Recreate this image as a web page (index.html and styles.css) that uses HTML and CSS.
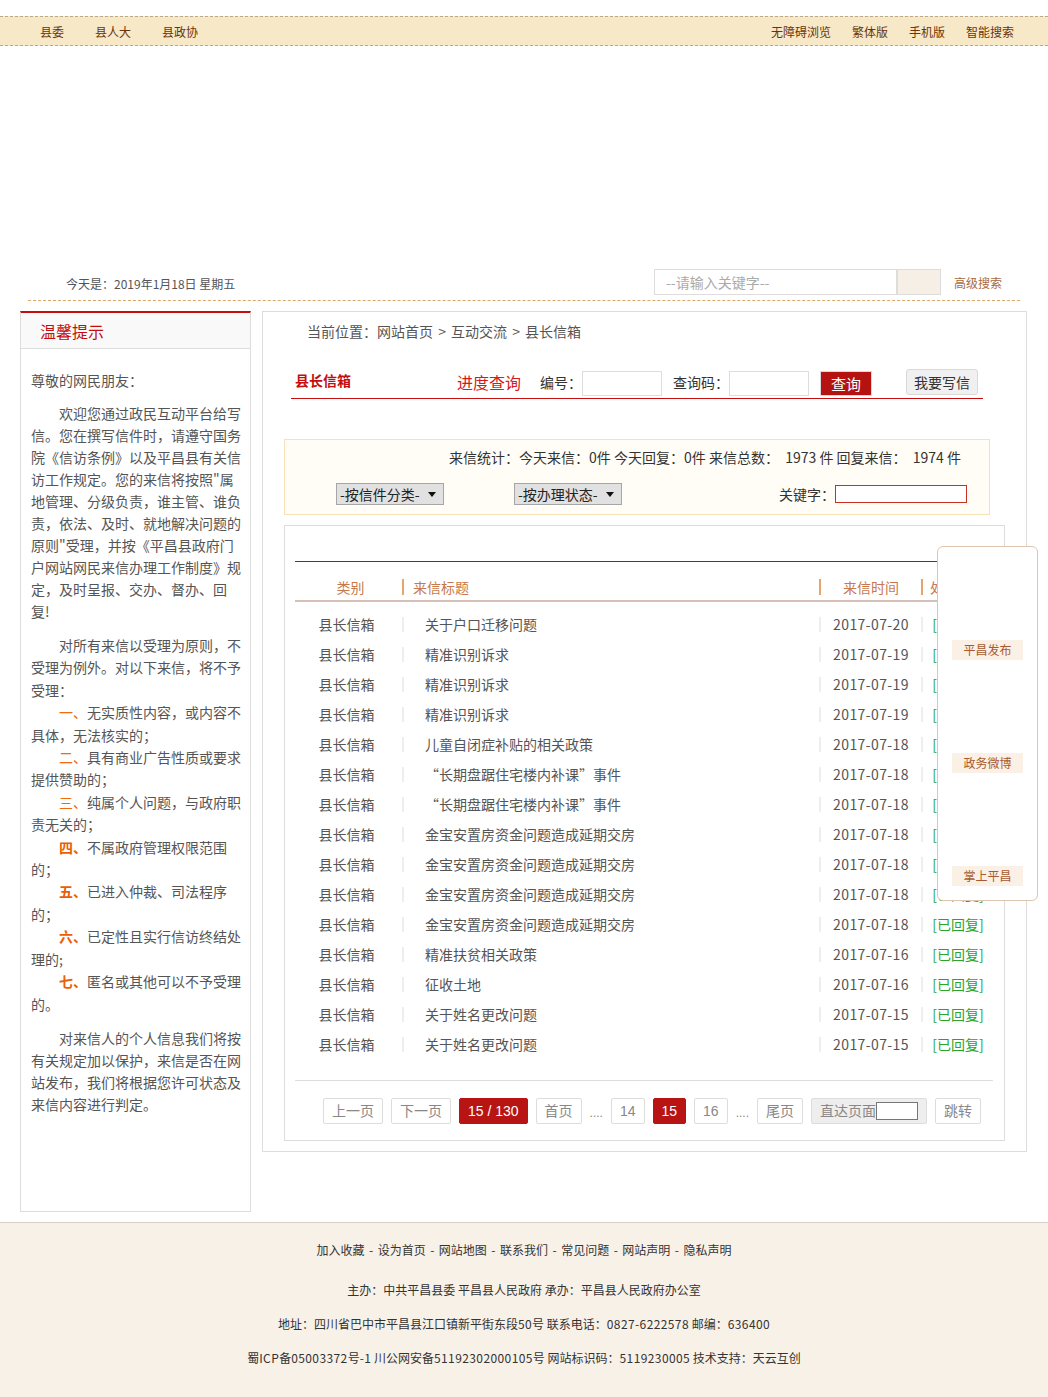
FILE: index.html
```html
<!DOCTYPE html>
<html lang="zh-CN">
<head>
<meta charset="utf-8">
<title>县长信箱</title>
<link rel="stylesheet" href="styles.css">
</head>
<body>
<div class="topbar">
  <div class="topbar-inner">
    <div class="tb-left"><a href="#">县委</a><a href="#">县人大</a><a href="#">县政协</a></div>
    <div class="tb-right"><a href="#">无障碍浏览</a><a href="#">繁体版</a><a href="#">手机版</a><a href="#">智能搜索</a></div>
  </div>
</div>
<div class="banner"></div>
<div class="container">
  <div class="info-row">
    <span class="date">今天是：2019年1月18日 星期五</span>
    <div class="search">
      <input class="search-input" placeholder="--请输入关键字--">
      <span class="search-btn"></span>
      <a class="adv" href="#">高级搜索</a>
    </div>
  </div>
  <div class="dash"></div>
  <div class="main">
    <aside class="side">
      <div class="side-head">温馨提示</div>
      <div class="side-body">
        <p class="p-first">尊敬的网民朋友：</p>
        <p class="ind">欢迎您通过政民互动平台给写信。您在撰写信件时，请遵守国务院《信访条例》以及平昌县有关信访工作规定。您的来信将按照"属地管理、分级负责，谁主管、谁负责，依法、及时、就地解决问题的原则"受理，并按《平昌县政府门户网站网民来信办理工作制度》规定，及时呈报、交办、督办、回复!</p>
        <div class="rules">
          <div class="ind">对所有来信以受理为原则，不受理为例外。对以下来信，将不予受理：</div>
          <div class="ind"><span class="num">一、</span>无实质性内容，或内容不具体，无法核实的；</div>
          <div class="ind"><span class="num">二、</span>具有商业广告性质或要求提供赞助的；</div>
          <div class="ind"><span class="num">三、</span>纯属个人问题，与政府职责无关的；</div>
          <div class="ind"><span class="num b">四、</span>不属政府管理权限范围的；</div>
          <div class="ind"><span class="num b">五、</span>已进入仲裁、司法程序的；</div>
          <div class="ind"><span class="num b">六、</span>已定性且实行信访终结处理的;</div>
          <div class="ind"><span class="num b">七、</span>匿名或其他可以不予受理的。</div>
        </div>
        <p class="ind">对来信人的个人信息我们将按有关规定加以保护，来信是否在网站发布，我们将根据您许可状态及来信内容进行判定。</p>
      </div>
    </aside>
    <section class="content">
      <div class="crumb">当前位置：网站首页 &gt; 互动交流 &gt; 县长信箱</div>
      <div class="tabrow">
        <span class="tab-title">县长信箱</span>
        <span class="tab-query">进度查询</span>
        <span class="lbl">编号：</span>
        <input class="inp" type="text">
        <span class="lbl lbl2">查询码：</span>
        <input class="inp" type="text">
        <span class="qbtn">查询</span>
        <span class="write">我要写信</span>
      </div>
      <div class="stats">
        <div class="stats-line">来信统计：今天来信：0件 今天回复：0件 来信总数： &nbsp;1973 件 回复来信： &nbsp;1974 件</div>
        <div class="filters">
          <span class="fsel">-按信件分类-<i class="arr"></i></span>
          <span class="fsel fsel2">-按办理状态-<i class="arr"></i></span>
          <span class="kw">关键字：</span>
          <input class="kw-inp" type="text">
        </div>
      </div>
      <div class="list">
        <div class="list-top"></div>
        <div class="thead">
          <span class="c-cat"><span class="hc">类别</span></span>
          <span class="c-title"><span class="hc hb">来信标题</span></span>
          <span class="c-date"><span class="hc hb">来信时间</span></span>
          <span class="c-st"><span class="hc hb">处理状态</span></span>
        </div>
        <div class="rows">
          <div class="row"><span class="c-cat">县长信箱</span><span class="c-title"><span class="cell">关于户口迁移问题</span></span><span class="c-date"><span class="cell">2017-07-20</span></span><span class="c-st"><span class="cell ok">[已回复]</span></span></div>
          <div class="row"><span class="c-cat">县长信箱</span><span class="c-title"><span class="cell">精准识别诉求</span></span><span class="c-date"><span class="cell">2017-07-19</span></span><span class="c-st"><span class="cell ok">[已回复]</span></span></div>
          <div class="row"><span class="c-cat">县长信箱</span><span class="c-title"><span class="cell">精准识别诉求</span></span><span class="c-date"><span class="cell">2017-07-19</span></span><span class="c-st"><span class="cell ok">[已回复]</span></span></div>
          <div class="row"><span class="c-cat">县长信箱</span><span class="c-title"><span class="cell">精准识别诉求</span></span><span class="c-date"><span class="cell">2017-07-19</span></span><span class="c-st"><span class="cell ok">[已回复]</span></span></div>
          <div class="row"><span class="c-cat">县长信箱</span><span class="c-title"><span class="cell">儿童自闭症补贴的相关政策</span></span><span class="c-date"><span class="cell">2017-07-18</span></span><span class="c-st"><span class="cell ok">[已回复]</span></span></div>
          <div class="row"><span class="c-cat">县长信箱</span><span class="c-title"><span class="cell">“长期盘踞住宅楼内补课”事件</span></span><span class="c-date"><span class="cell">2017-07-18</span></span><span class="c-st"><span class="cell ok">[已回复]</span></span></div>
          <div class="row"><span class="c-cat">县长信箱</span><span class="c-title"><span class="cell">“长期盘踞住宅楼内补课”事件</span></span><span class="c-date"><span class="cell">2017-07-18</span></span><span class="c-st"><span class="cell ok">[已回复]</span></span></div>
          <div class="row"><span class="c-cat">县长信箱</span><span class="c-title"><span class="cell">金宝安置房资金问题造成延期交房</span></span><span class="c-date"><span class="cell">2017-07-18</span></span><span class="c-st"><span class="cell ok">[已回复]</span></span></div>
          <div class="row"><span class="c-cat">县长信箱</span><span class="c-title"><span class="cell">金宝安置房资金问题造成延期交房</span></span><span class="c-date"><span class="cell">2017-07-18</span></span><span class="c-st"><span class="cell ok">[已回复]</span></span></div>
          <div class="row"><span class="c-cat">县长信箱</span><span class="c-title"><span class="cell">金宝安置房资金问题造成延期交房</span></span><span class="c-date"><span class="cell">2017-07-18</span></span><span class="c-st"><span class="cell ok">[已回复]</span></span></div>
          <div class="row"><span class="c-cat">县长信箱</span><span class="c-title"><span class="cell">金宝安置房资金问题造成延期交房</span></span><span class="c-date"><span class="cell">2017-07-18</span></span><span class="c-st"><span class="cell ok">[已回复]</span></span></div>
          <div class="row"><span class="c-cat">县长信箱</span><span class="c-title"><span class="cell">精准扶贫相关政策</span></span><span class="c-date"><span class="cell">2017-07-16</span></span><span class="c-st"><span class="cell ok">[已回复]</span></span></div>
          <div class="row"><span class="c-cat">县长信箱</span><span class="c-title"><span class="cell">征收土地</span></span><span class="c-date"><span class="cell">2017-07-16</span></span><span class="c-st"><span class="cell ok">[已回复]</span></span></div>
          <div class="row"><span class="c-cat">县长信箱</span><span class="c-title"><span class="cell">关于姓名更改问题</span></span><span class="c-date"><span class="cell">2017-07-15</span></span><span class="c-st"><span class="cell ok">[已回复]</span></span></div>
          <div class="row"><span class="c-cat">县长信箱</span><span class="c-title"><span class="cell">关于姓名更改问题</span></span><span class="c-date"><span class="cell">2017-07-15</span></span><span class="c-st"><span class="cell ok">[已回复]</span></span></div>
        </div>
        <div class="pager">
          <span class="pg">上一页</span>
          <span class="pg">下一页</span>
          <span class="pg cur">15 / 130</span>
          <span class="pg">首页</span>
          <span class="dots">....</span>
          <span class="pg">14</span>
          <span class="pg cur">15</span>
          <span class="pg">16</span>
          <span class="dots">....</span>
          <span class="pg">尾页</span>
          <span class="pg goto">直达页面<input class="goto-inp" type="text"></span>
          <span class="pg">跳转</span>
        </div>
      </div>
    </section>
  </div>
</div>
<footer class="footer">
  <div class="links">加入收藏 - 设为首页 - 网站地图 - 联系我们 - 常见问题 - 网站声明 - 隐私声明</div>
  <div>主办：中共平昌县委 平昌县人民政府 承办：平昌县人民政府办公室</div>
  <div>地址：四川省巴中市平昌县江口镇新平街东段<span class="n">50</span>号 联系电话：<span class="n">0827-6222578</span> 邮编：<span class="n">636400</span></div>
  <div>蜀<span class="n">ICP</span>备<span class="n">05003372</span>号<span class="n">-1</span> 川公网安备<span class="n">51192302000105</span>号 网站标识码：<span class="n">5119230005</span> 技术支持：天云互创</div>
</footer>
<div class="float-panel">
  <a class="fp-item" href="#">平昌发布</a>
  <a class="fp-item" href="#">政务微博</a>
  <a class="fp-item" href="#">掌上平昌</a>
</div>
</body>
</html>
```
FILE: styles.css
```css
* { box-sizing: border-box; }
body {
  margin: 0;
  padding-top: 16px;
  font-family: "Microsoft YaHei", "Noto Sans CJK SC", sans-serif;
  color: #555;
  background: #fff;
  position: relative;
}
a { text-decoration: none; color: inherit; }
p { margin: 0; }

/* top bar */
.topbar {
  background: #f7e8c7;
  border-top: 1px dashed #b9a98c;
  border-bottom: 1px dashed #b9a98c;
  height: 30px;
}
.topbar-inner {
  width: 1008px;
  margin: 0 auto;
  display: flex;
  justify-content: space-between;
  padding: 1px 14px 0 20px;
  font-size: 12px;
  line-height: 28px;
  color: #6b3408;
}
.tb-left { display: flex; gap: 31px; }
.tb-right { display: flex; gap: 21px; }

.banner { height: 223px; }
.container { width: 1008px; margin: 0 auto; }

/* date + search */
.info-row {
  display: flex;
  align-items: center;
  justify-content: space-between;
  height: 26px;
  padding: 0 26px 0 46px;
}
.date { font-size: 12px; color: #555; padding-top: 2px; }
.search { display: flex; align-items: center; }
.search-input {
  width: 243px;
  height: 26px;
  border: 1px solid #ddd;
  padding: 0 0 0 11px;
  font: 14px "Microsoft YaHei", "Noto Sans CJK SC", sans-serif;
  outline: none;
  color: #555;
}
.search-input::placeholder { color: #aaa; }
.search-btn {
  width: 44px;
  height: 26px;
  border: 1px solid #ddd;
  background: #f5efe5;
}
.adv { margin-left: 13px; font-size: 12px; color: #a8693f; }
.dash { margin: 5px 8px 0; border-top: 1px dashed #dba86b; }

.main { display: flex; gap: 11px; margin-top: 10px; align-items: flex-start; }

/* side panel */
.side {
  width: 231px;
  height: 901px;
  border: 1px solid #ddd;
  border-top: 2px solid #c40e0e;
}
.side-head {
  height: 36px;
  background: #f9f9f9;
  border-bottom: 1px solid #ddd;
  padding: 1px 0 0 19px;
  font-size: 16px;
  line-height: 34px;
  color: #c40e0e;
}
.side-body {
  padding: 20px 9px 0 10px;
  font-size: 14px;
  line-height: 22px;
  color: #555;
}
.side-body .p-first { margin-bottom: 11px; }
.side-body .ind { text-indent: 2em; }
.side-body p.ind { margin-bottom: 12px; }
.rules { margin-bottom: 12px; line-height: 22.4px; }
.num { color: #f06a10; }
.num.b { font-weight: bold; color: #ea5f06; }

/* content */
.content {
  width: 765px;
  border: 1px solid #ddd;
  padding-bottom: 10px;
}
.crumb {
  padding: 9px 0 0 44px;
  font-size: 14px;
  line-height: 20px;
  color: #555;
  word-spacing: 2px;
}
.tabrow {
  display: flex;
  align-items: center;
  height: 32px;
  margin: 26px 43px 0 28px;
  border-bottom: 1px solid #c40e0e;
  padding: 0 5px 0 4px;
  font-size: 14px;
  color: #333;
}
.tab-title { width: 162px; font-weight: bold; color: #c40e0e; font-size: 14px; margin-top: -6px; }
.tab-query { font-size: 16px; color: #d51b1b; margin-right: 19px; margin-top: -2px; }
.lbl { font-size: 14px; color: #333; margin-top: -1px; }
.lbl2 { margin-left: 11px; }
.inp {
  width: 80px;
  height: 25px;
  border: 1px solid #ddd;
  outline: none;
  margin-top: 1px;
}
.qbtn {
  margin-left: 11px;
  width: 52px;
  height: 25px;
  margin-top: 1px;
  background: #b51212;
  border: 1px solid #d9d9d9;
  color: #fff;
  font-size: 15px;
  line-height: 23px;
  text-align: center;
}
.write {
  margin-left: auto;
  width: 72px;
  height: 26px;
  margin-top: -2px;
  background: #f0f0f0;
  border: 1px solid #d9d9d9;
  border-radius: 3px;
  font-size: 14px;
  line-height: 24px;
  text-align: center;
  color: #333;
}

.stats {
  margin: 40px 0 0 21px;
  width: 706px;
  height: 76px;
  background: #fffdf6;
  border: 1px solid #f6e2b6;
}
.stats-line {
  text-align: right;
  padding: 7px 28px 0 0;
  font-size: 14px;
  line-height: 20px;
  color: #333;
}
.filters {
  display: flex;
  align-items: center;
  margin-top: 16px;
  padding: 0 22px 0 51px;
}
.fsel {
  width: 108px;
  height: 22px;
  border: 1px solid #a6a6a6;
  background: #e1e1e1;
  font-size: 14px;
  line-height: 20px;
  color: #222;
  padding-left: 3px;
  display: flex;
  align-items: center;
}
.fsel2 { margin-left: 70px; }
.arr {
  margin-left: auto;
  margin-right: 7px;
  width: 0;
  height: 0;
  border-left: 4px solid transparent;
  border-right: 4px solid transparent;
  border-top: 5px solid #111;
}
.kw { margin-left: auto; font-size: 14px; color: #333; }
.kw-inp {
  width: 132px;
  height: 18px;
  border: 1px solid #c9301f;
  outline: none;
  background: #fff;
}

/* list */
.list {
  margin: 10px 0 0 21px;
  width: 721px;
  border: 1px solid #ddd;
  padding: 0 11px 16px 10px;
}
.list-top { height: 36px; border-bottom: 1px solid #9b1b1b; }
.thead {
  display: flex;
  align-items: flex-end;
  height: 40px;
  padding-bottom: 5px;
  border-bottom: 2px solid #d6c0b5;
  font-size: 14px;
  color: #c8784a;
}
.c-cat { width: 107px; text-align: center; }
.thead .c-cat { padding-left: 4px; }
.row .c-cat { padding-right: 4px; }
.c-title { width: 417px; }
.c-date { width: 102px; }
.c-st { width: 72px; }
.hc { display: block; height: 16px; line-height: 16px; }
.hb { border-left: 2px solid #e5a570; }
.c-title .hc { padding-left: 9px; }
.c-date .hc, .c-st .hc { text-align: center; }

.rows { margin-top: 7px; }
.row {
  display: flex;
  align-items: center;
  height: 30px;
  font-size: 14px;
  color: #555;
}
.cell {
  display: block;
  height: 15px;
  line-height: 15px;
  border-left: 2px solid #eee;
  white-space: nowrap;
}
.c-title .cell { padding-left: 21px; }
.c-date .cell, .c-st .cell { text-align: center; }
.c-date .cell { letter-spacing: 0.4px; }
.ok { color: #2aa52a; }

.pager {
  margin-top: 21px;
  border-top: 1px solid #ddd;
  padding: 17px 12px 0 0;
  display: flex;
  justify-content: flex-end;
  align-items: center;
  gap: 8px;
  font-family: "Liberation Sans", "Noto Sans CJK SC", sans-serif;
}
.pg {
  height: 26px;
  border: 1px solid #ddd;
  border-radius: 2px;
  padding: 0 8px;
  font-size: 14px;
  line-height: 24px;
  color: #888;
  background: #fff;
  display: flex;
  align-items: center;
}
.pg.cur { background: #b81414; border-color: #b81414; color: #fff; }
.pg.goto { background: #eee; }
.goto-inp {
  width: 42px;
  height: 18px;
  border: 1px solid #767676;
  background: #fff;
  outline: none;
}
.dots { font-size: 12px; color: #888; margin-top: 4px; }

/* footer */
.footer {
  margin-top: 10px;
  background: #f8f1e8;
  border-top: 1px solid #d5cfc5;
  padding: 10px 0 22px;
  text-align: center;
  font-size: 12px;
  color: #333;
  line-height: 34px;
}
.footer .links { margin-bottom: 6px; word-spacing: 1.8px; }
.footer .n { letter-spacing: 0.4px; }

/* floating side widget */
.float-panel {
  position: absolute;
  top: 546px;
  left: 937px;
  width: 101px;
  height: 355px;
  background: #fff;
  border: 1px solid #dcc6b0;
  border-radius: 6px;
  display: flex;
  flex-direction: column;
  padding: 93px 0 0 14px;
  gap: 93px;
}
.fp-item {
  display: block;
  width: 71px;
  height: 20px;
  background: #faf0e5;
  color: #a85a30;
  font-size: 12px;
  line-height: 20px;
  text-align: center;
}
```
